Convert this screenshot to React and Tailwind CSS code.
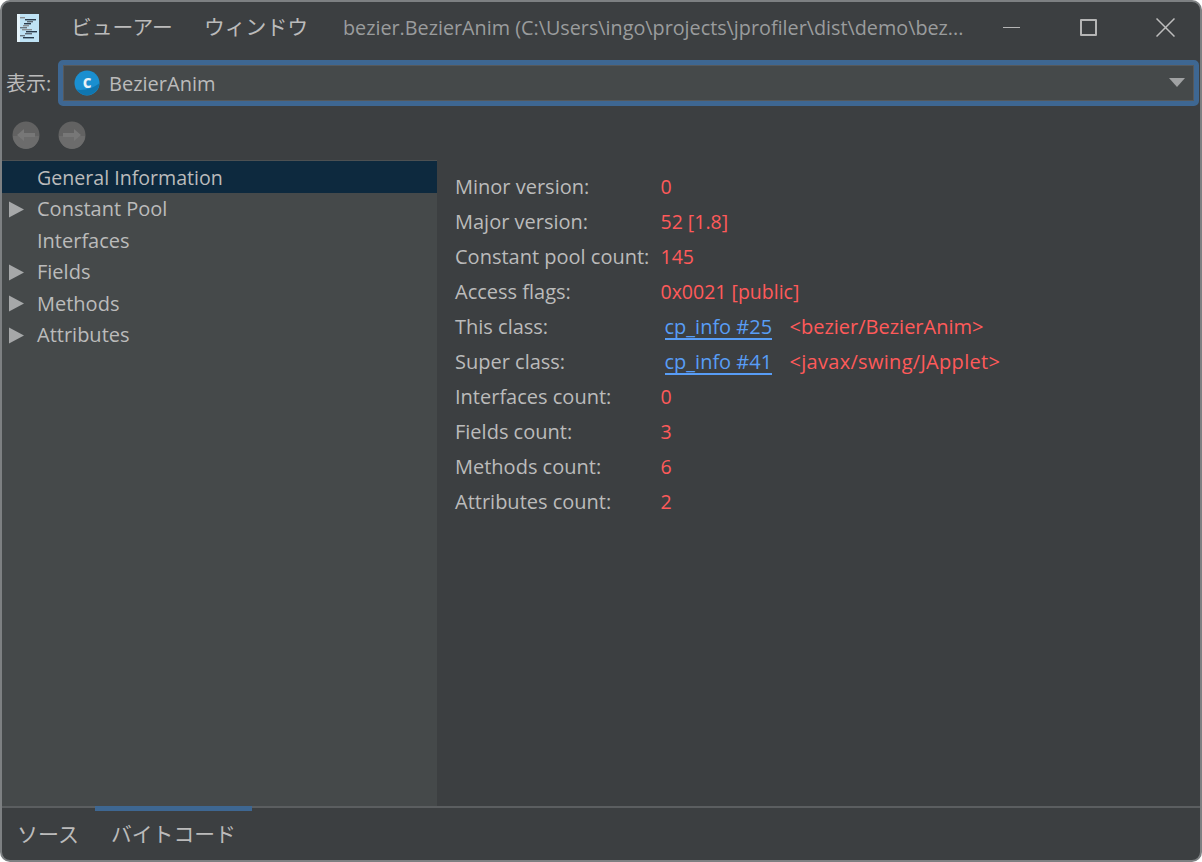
const FONT = "font-['Open_Sans','Noto_Sans_CJK_JP',sans-serif]";

function DocIcon() {
  const rows = [[3,8,"#8a8f94"],[8,19,"#2a3a4a"],[10,16,"#5f6a75"],[7,14,"#2a3a4a"],[6,12,"#8a8f94"],[3,10,"#6a7580"],[5,15,"#8a8f94"],[9,20,"#2a3a4a"],[8,15,"#5f6a75"],[3,8,"#6a7580"],[6,17,"#2a3a4a"]];
  return (
    <svg width="22" height="28" viewBox="0 0 22 28" className="shrink-0">
      <rect x="0" y="0" width="22" height="28" fill="#bfe3f5" />
      <rect x="0" y="0" width="3" height="28" fill="#e6f4fb" />
      {rows.map((r, i) => (
        <rect key={i} x={r[0]} y={3 + i * 2} width={r[1] - r[0]} height="1.4" fill={r[2]} />
      ))}
    </svg>
  );
}

function NavBtn({ dir }) {
  return (
    <svg width="28" height="28" viewBox="0 0 28 28">
      <circle cx="14" cy="14" r="13.5" fill="#626262" />
      <path d="M1 15a13 13 0 0 0 26 0z" fill="#6c6c6c" />
      {dir === "l" ? (
        <path d="M5 14l7-6v4h11v4H12v4z" fill="#777777" />
      ) : (
        <path d="M23 14l-7-6v4H5v4h11v4z" fill="#777777" />
      )}
    </svg>
  );
}

function TreeRow({ label, arrow, selected }) {
  return (
    <div className={`h-[31.5px] flex items-center ${selected ? "bg-[#0d293e]" : ""}`}>
      <div className="w-[35px] shrink-0 pl-[6px] pt-[2px] flex items-center">
        {arrow && (
          <svg width="16" height="17" viewBox="0 0 16 17">
            <path d="M1 0.5L16 8.5L1 16.5z" fill="#a6a8a9" />
          </svg>
        )}
      </div>
      <span className={`${selected ? "text-[19.6px]" : "text-[20px]"} pt-[2px]`}>{label}</span>
    </div>
  );
}

function Info({ label, children }) {
  return (
    <div className="h-[35px] flex items-center">
      <span className="w-[205.5px] shrink-0">{label}</span>
      {children}
    </div>
  );
}

function Ref({ link, name, cls }) {
  return (
    <>
      <span className="ml-[4px] w-[125px] shrink-0">
        <span className="text-[#589df6] border-b-2 border-[#589df6] leading-[23px] inline-block h-[25px]">{link}</span>
      </span>
      <span className={`text-[#ff5a5a] ${cls}`}>{name}</span>
    </>
  );
}

function Val({ children }) {
  return <span className="text-[#ff5a5a] text-[19.5px]">{children}</span>;
}

export default function App() {
  return (
    <div className={`w-[1202px] h-[862px] bg-white ${FONT} text-[#bbbbbb] text-[20px] overflow-hidden`}>
      <div className="w-full h-full flex flex-col bg-[#3c3f41] border-2 border-[#7d8082] rounded-[10px] overflow-hidden">
        <div className="h-[51px] flex items-center shrink-0">
          <div className="ml-[15px] w-[54px] shrink-0"><DocIcon /></div>
          <span className="text-[20.8px] w-[133px] shrink-0">ビューアー</span>
          <span className="text-[20.8px] w-[139px] shrink-0">ウィンドウ</span>
          <span className="text-[#9a9c9d] text-[19.78px] w-[630px] truncate shrink-0">bezier.BezierAnim (C:\Users\ingo\projects\jprofiler\dist\demo\bez...</span>
          <div className="ml-[30px] w-[17px] h-[1.5px] bg-[#b5b5b5] shrink-0" />
          <div className="ml-[60px] w-[17px] h-[17px] border-2 border-[#b5b5b5] rounded-[1px] shrink-0" />
          <svg width="19" height="19" viewBox="0 0 19 19" className="ml-[59px] shrink-0">
            <path d="M0.5 0.5l18 18M18.5 0.5l-18 18" stroke="#bdbdbd" strokeWidth="1.5" />
          </svg>
        </div>
        <div className="mt-[7px] h-[46px] flex items-center shrink-0 pl-[4px] pr-[1px]">
          <span className="w-[52px] shrink-0 pt-[1px]">表示:</span>
          <div className="flex-1 h-[46px] rounded-[5px] border-[5px] border-[#3e6792] bg-[#45494a] flex items-center pl-[11px] pr-[9px] shadow-[inset_0_0_0_1px_#56595b]">
            <svg width="26" height="26" viewBox="0 0 26 26" className="shrink-0">
              <circle cx="13" cy="13" r="12.5" fill="#1a8fd0" />
              <path d="M25.5 13a12.5 12.5 0 0 1-23 6.5C10 21 20 18 25.5 13z" fill="#0f76b0" />
              <text x="13" y="17.5" textAnchor="middle" fontSize="17" fontWeight="700" fill="#e8f1f6" fontFamily="'Open Sans',sans-serif">c</text>
            </svg>
            <span className="ml-[9px] pt-[1px]">BezierAnim</span>
            <svg width="16" height="10" viewBox="0 0 16 10" className="ml-auto shrink-0">
              <path d="M0 0h16l-8 9z" fill="#a0a2a3" />
            </svg>
          </div>
        </div>
        <div className="h-[54px] flex items-center gap-[18px] pl-[10px] pt-[4px] shrink-0">
          <NavBtn dir="l" />
          <NavBtn dir="r" />
        </div>
        <div className="flex-1 flex min-h-0">
          <div className="w-[435px] shrink-0 bg-[#45494a] border-t border-[#4c5052]">
            <TreeRow label="General Information" selected />
            <TreeRow label="Constant Pool" arrow />
            <TreeRow label="Interfaces" />
            <TreeRow label="Fields" arrow />
            <TreeRow label="Methods" arrow />
            <TreeRow label="Attributes" arrow />
          </div>
          <div className="flex-1 pl-[18px] pt-[9px]">
            <Info label="Minor version:"><Val>0</Val></Info>
            <Info label="Major version:"><Val>52 [1.8]</Val></Info>
            <Info label="Constant pool count:"><Val>145</Val></Info>
            <Info label="Access flags:"><Val>0x0021 [public]</Val></Info>
            <Info label="This class:"><Ref link="cp_info #25" name="<bezier/BezierAnim>" cls="" /></Info>
            <Info label="Super class:"><Ref link="cp_info #41" name="<javax/swing/JApplet>" cls="tracking-[0.3px]" /></Info>
            <Info label="Interfaces count:"><Val>0</Val></Info>
            <Info label="Fields count:"><Val>3</Val></Info>
            <Info label="Methods count:"><Val>6</Val></Info>
            <Info label="Attributes count:"><Val>2</Val></Info>
          </div>
        </div>
        <div className="h-[54px] shrink-0 flex border-t-2 border-[#5b5e60] text-[21px]">
          <div className="w-[93px] pl-[15px] pt-[11px]">ソース</div>
          <div className="w-[157px] -mt-[2px] pt-[8px] pl-[16px] border-t-[5px] border-[#3e6792] h-[56px] box-border text-[20.8px]">バイトコード</div>
        </div>
      </div>
    </div>
  );
}
